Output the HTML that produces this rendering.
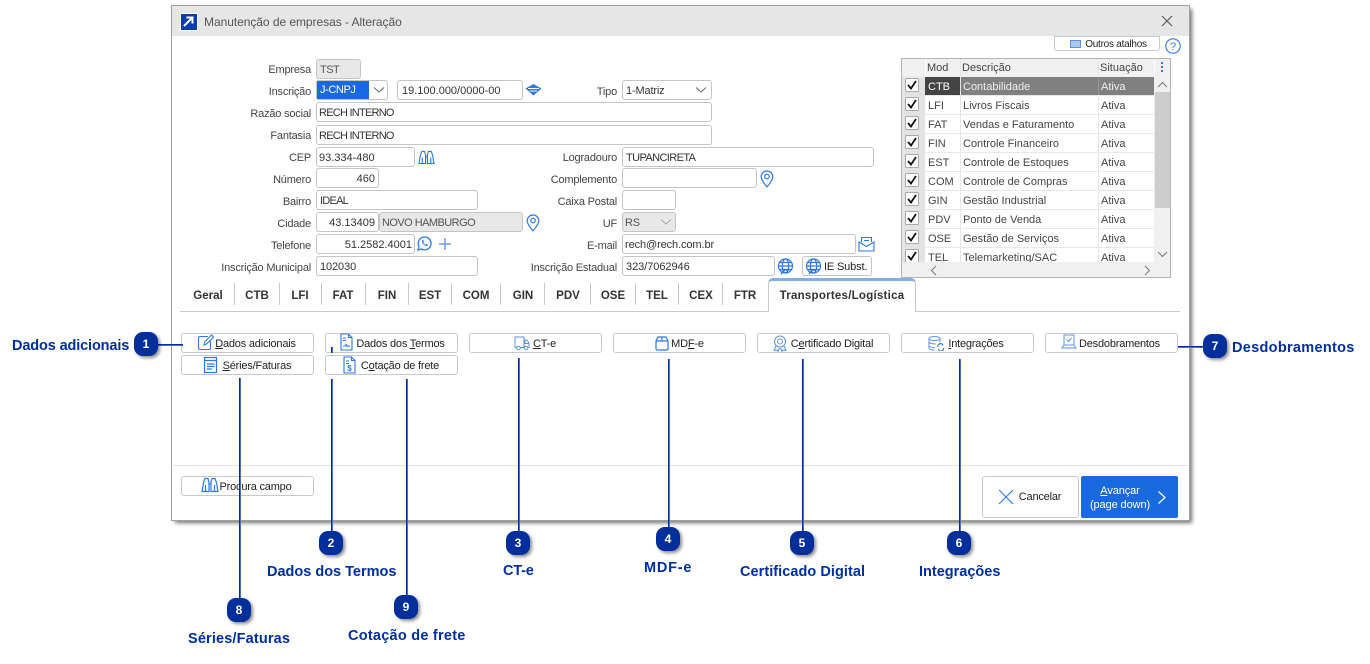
<!DOCTYPE html>
<html lang="pt-BR"><head><meta charset="utf-8"><title>Manutenção de empresas</title>
<style>
html,body{margin:0;padding:0;background:#fff}
#p{position:relative;width:1370px;height:664px;overflow:hidden;background:#fff;font:11px/18px "Liberation Sans",sans-serif;color:#333}
#p div,#p svg{position:absolute}
#d{left:172px;top:6px;width:1017px;height:514px;background:#fff;box-shadow:0 0 0 1px #a0a0a0,3px 3px 4px rgba(0,0,0,.55)}
#t{left:172px;top:6px;width:1017px;height:30px;background:#e6e6e6;font-size:12px;line-height:31px;color:#555}
.l{width:110px;text-align:right;white-space:nowrap;height:22px;line-height:22px;color:#444;letter-spacing:-.2px}
.f{box-sizing:border-box;border:1px solid #c4c4c4;border-radius:3px;background:#fff;white-space:nowrap;padding:0 2px;line-height:20px;height:20px;color:#333;letter-spacing:-.15px}
.g{background:#e8e8e8;color:#555}
.r{text-align:right}
.c{letter-spacing:-.75px}
.b{box-sizing:border-box;width:133px;height:20px;border:1px solid #c8c8c8;border-radius:3px;background:#fff;text-align:center;line-height:20px;color:#222;white-space:nowrap;letter-spacing:-.2px}
.tb{top:285px;height:22px;line-height:22px;font-weight:bold;font-size:11.5px;color:#333;text-align:center;transform:translateX(-50%);white-space:nowrap}
.s{top:283px;width:1px;height:22px;background:#c8c8c8}
.h{top:58px;height:20px;line-height:20px;color:#444;white-space:nowrap}
.hl{background:linear-gradient(180deg,#002f9c 70%,#9fb1de 70%);height:2px}
.vl{background:linear-gradient(90deg,#002f9c 70%,#9fb1de 70%);width:2px}
.n{width:24px;height:24px;border-radius:9px;background:#002f9c;color:#fff;font-weight:bold;font-size:12px;line-height:24px;text-align:center;box-shadow:2px 2px 3px rgba(0,0,0,.45)}
.x{color:#002f9c;font-weight:bold;font-size:14.5px;line-height:22px;white-space:nowrap;height:22px}
.i{fill:none;stroke:#2f78e4;stroke-width:1.2}
</style></head><body><div id="p">
<svg width="0" height="0" style="position:absolute"><defs>
<symbol id="pin" viewBox="0 0 14 18"><path d="M7 1C3.700 1 1.200 3.500 1.200 6.600 1.200 10.500 7 16.800 7 16.800S12.800 10.500 12.800 6.600C12.800 3.500 10.300 1 7 1Z"/><circle cx="7" cy="6.500" r="2.300"/></symbol>
<symbol id="bin" viewBox="0 0 18 16"><path d="M1 14.500 2.500 5.500 4 1.500H7L8 5.500V14.500ZM10 14.500V5.500L11 1.500H14L15.500 5.500 17 14.500ZM8 7H10M4.500 14.500V8M13.500 14.500V8"/></symbol>
<symbol id="glo" viewBox="0 0 17 17"><circle cx="8.500" cy="8" r="7"/><ellipse cx="8.500" cy="8" rx="3.200" ry="7"/><path d="M1.500 8H15.500M2.500 4.500H14.500M2.500 11.500H14.500"/><path d="M4 16 8 11.500 11 13" stroke-width="1.500"/></symbol>
</defs></svg>
<div style="left:175px;top:518px;width:197px;height:3px;background:repeating-linear-gradient(90deg,#777 0 3px,transparent 3px 7px);opacity:.5"></div>
<div id="d"></div>
<div id="t"><div style="left:32px;top:1px;white-space:nowrap;letter-spacing:-.05px">Manutenção de empresas - Alteração</div></div>
<div style="left:180px;top:13px;width:16px;height:16px;background:#0b3ea8;border:1px solid #fff"></div>
<svg style="left:181px;top:14px" width="15" height="15" viewBox="0 0 15 15"><path d="M3 12 11 4M5.500 3.500H11.500V9.500" fill="none" stroke="#fff" stroke-width="2"/></svg>
<svg style="left:1161px;top:15px" width="12" height="12" viewBox="0 0 12 12"><path d="M1 1 11 11M11 1 1 11" stroke="#555" stroke-width="1.100"/></svg>

<div class="b" style="left:1054px;top:36px;width:106px;height:15px;line-height:16px;font-size:10px;letter-spacing:-.25px;border-radius:0 0 3px 3px;padding-left:18px">Outros atalhos</div>
<div style="left:1070px;top:40px;width:9px;height:6px;background:#a9c8ee;border:1px solid #5b93d8"></div>
<svg style="left:1165px;top:38px" width="16" height="16" viewBox="0 0 16 16"><circle cx="8" cy="8" r="7.200" fill="none" stroke="#2f78e4" stroke-width="1.100"/><text x="8" y="12" text-anchor="middle" font-size="11" font-family="Liberation Sans" fill="#2f78e4">?</text></svg>

<div class="l" style="left:201px;top:59px">Empresa</div>
<div class="f g" style="left:316px;top:59px;width:45px;padding-left:3px;letter-spacing:-.5px">TST</div>
<div class="l" style="left:201px;top:81px">Inscrição</div>
<div class="f" style="left:316px;top:80px;width:72px;padding:0"></div>
<div style="left:317px;top:81px;width:52px;height:18px;background:#1a6adf;color:#fff;line-height:19px;padding-left:3px;box-sizing:border-box;letter-spacing:-.4px">J-CNPJ</div>
<svg style="left:373px;top:86px" width="12" height="8" viewBox="0 0 12 8"><path d="M1 1.500 6 6 11 1.500" fill="none" stroke="#666"/></svg>
<div class="f" style="left:397px;top:80px;width:126px;padding-left:4px;letter-spacing:0">19.100.000/0000-00</div>
<svg style="left:525px;top:84px" width="17" height="12" viewBox="0 0 17 12"><path d="M8.500 0 16.500 4.500 8.500 11.500 .5 4.500Z" fill="#2f78e4"/><path d="M3 4.500H14M5 7H12" stroke="#fff" stroke-width=".9"/></svg>
<div class="l" style="left:507px;top:81px">Tipo</div>
<div class="f" style="left:622px;top:80px;width:90px;padding-left:3px">1-Matriz</div>
<svg style="left:695px;top:86px" width="12" height="8" viewBox="0 0 12 8"><path d="M1 1.500 6 6 11 1.500" fill="none" stroke="#666"/></svg>

<div class="l" style="left:201px;top:103px">Razão social</div>
<div class="f c" style="left:316px;top:102px;width:396px">RECH INTERNO</div>
<div class="l" style="left:201px;top:125px">Fantasia</div>
<div class="f c" style="left:316px;top:125px;width:396px">RECH INTERNO</div>
<div class="l" style="left:201px;top:147px">CEP</div>
<div class="f" style="left:316px;top:147px;width:99px;letter-spacing:0">93.334-480</div>
<svg class="i" style="left:418px;top:150px" width="17" height="15"><use href="#bin"/></svg>
<div class="l" style="left:201px;top:169px">Número</div>
<div class="f r" style="left:316px;top:168px;width:63px;padding-right:3px;letter-spacing:0">460</div>
<div class="l" style="left:201px;top:191px">Bairro</div>
<div class="f c" style="left:316px;top:190px;width:162px;padding-left:3px">IDEAL</div>
<div class="l" style="left:201px;top:213px">Cidade</div>
<div class="f r" style="left:316px;top:212px;width:63px;padding-right:3px;letter-spacing:0">43.13409</div>
<div class="f g" style="left:379px;top:212px;width:144px;letter-spacing:-.55px">NOVO HAMBURGO</div>
<svg class="i" style="left:526px;top:214px" width="14" height="18"><use href="#pin"/></svg>
<div class="l" style="left:201px;top:235px">Telefone</div>
<div class="f r" style="left:316px;top:234px;width:99px;letter-spacing:0">51.2582.4001</div>
<svg style="left:417px;top:236px" width="15" height="15" viewBox="0 0 15 15"><path d="M1 14 2 10.500A6.400 6.400 0 1 1 4.500 13Z" fill="none" stroke="#2f78e4" stroke-width="1.300"/><path d="M5 4.500C4.500 7 7.500 10.500 10.500 10 11.200 9 10.800 8.500 9.500 8L8.700 8.800C7.500 8.300 6.800 7.500 6.300 6.300L7 5.500C6.500 4 5.800 3.800 5 4.500Z" fill="#2f78e4"/></svg>
<svg style="left:438px;top:237px" width="14" height="14" viewBox="0 0 14 14"><path d="M7 1V13M1 7H13" stroke="#6e9fe8" stroke-width="1.500"/></svg>
<div class="l" style="left:201px;top:257px">Inscrição Municipal</div>
<div class="f" style="left:316px;top:256px;width:162px;padding-left:3px;letter-spacing:-.1px">102030</div>

<div class="l" style="left:507px;top:147px">Logradouro</div>
<div class="f" style="left:622px;top:147px;width:252px;padding-left:3px;letter-spacing:-.6px">TUPANCIRETA</div>
<div class="l" style="left:507px;top:169px">Complemento</div>
<div class="f" style="left:622px;top:168px;width:135px"></div>
<svg class="i" style="left:760px;top:170px" width="14" height="18"><use href="#pin"/></svg>
<div class="l" style="left:507px;top:191px">Caixa Postal</div>
<div class="f" style="left:622px;top:190px;width:54px"></div>
<div class="l" style="left:507px;top:213px">UF</div>
<div class="f g" style="left:622px;top:212px;width:54px">RS</div>
<svg style="left:660px;top:218px" width="12" height="8" viewBox="0 0 12 8"><path d="M1 1.500 6 6 11 1.500" fill="none" stroke="#aaa"/></svg>
<div class="l" style="left:507px;top:235px">E-mail</div>
<div class="f" style="left:622px;top:234px;width:234px;letter-spacing:-.1px">rech@rech.com.br</div>
<svg style="left:858px;top:236px" width="17" height="16" viewBox="0 0 17 16"><path d="M3.500 6V1.500H13.500V6M1 6V15H16V6L8.500 10.500ZM6 4.500H11" fill="none" stroke="#2f78e4" stroke-width="1.100"/></svg>
<div class="l" style="left:507px;top:257px">Inscrição Estadual</div>
<div class="f" style="left:622px;top:256px;width:153px;padding-left:3px;letter-spacing:-.05px">323/7062946</div>
<svg class="i" style="left:777px;top:258px" width="17" height="17"><use href="#glo"/></svg>
<div class="f" style="left:802px;top:256px;width:70px;padding:0 0 0 21px;color:#222">IE Subst.</div>
<svg class="i" style="left:805px;top:258px" width="17" height="17"><use href="#glo"/></svg>

<div style="left:901px;top:58px;width:270px;height:220px;box-sizing:border-box;border:1px solid #b5b5b5;background:#f0f0f0;overflow:hidden" id="grid">
<div style="left:0;top:18px;width:23px;height:186px;background:#e3e3e3"></div>
<div style="left:23px;top:18px;width:229px;height:186px;background:#fff"></div>
<div style="left:23px;top:0;width:1px;height:204px;background:#fff"></div>
<div style="left:58px;top:0;width:1px;height:204px;background:#e6e6e6"></div>
<div style="left:196px;top:0;width:1px;height:204px;background:#e6e6e6"></div>
<div style="left:252px;top:0;width:1px;height:18px;background:#fff"></div>
<div style="left:23px;top:18px;width:35px;height:19px;background:#444"></div>
<div style="left:59px;top:18px;width:193px;height:19px;background:#808080"></div>
<div style="left:196px;top:18px;width:1px;height:19px;background:#999"></div>
<div style="left:23px;top:55px;width:229px;height:1px;background:#e8e8e8"></div>
<div style="left:23px;top:74px;width:229px;height:1px;background:#e8e8e8"></div>
<div style="left:23px;top:93px;width:229px;height:1px;background:#e8e8e8"></div>
<div style="left:23px;top:112px;width:229px;height:1px;background:#e8e8e8"></div>
<div style="left:23px;top:131px;width:229px;height:1px;background:#e8e8e8"></div>
<div style="left:23px;top:150px;width:229px;height:1px;background:#e8e8e8"></div>
<div style="left:23px;top:169px;width:229px;height:1px;background:#e8e8e8"></div>
<div style="left:23px;top:188px;width:229px;height:1px;background:#e8e8e8"></div>
<div style="left:23px;top:36px;width:229px;height:1px;background:#e8e8e8"></div>
<div style="left:253px;top:33px;width:15px;height:116px;background:#cdcdcd"></div>
</div>
<div class="h" style="left:927px">Mod</div><div class="h" style="left:962px">Descrição</div><div class="h" style="left:1100px">Situação</div>
<div style="left:1161px;top:62px;width:2px;height:2px;background:#2f78e4;box-shadow:0 4px #2f78e4,0 8px #2f78e4"></div>
<div class="h" style="left:928px;top:77px;color:#fff">CTB</div><div class="h" style="left:963px;top:77px;color:#eee">Contabilidade</div><div class="h" style="left:1101px;top:77px;color:#eee">Ativa</div>
<div class="h" style="left:928px;top:96px">LFI</div><div class="h" style="left:963px;top:96px">Livros Fiscais</div><div class="h" style="left:1101px;top:96px">Ativa</div>
<div class="h" style="left:928px;top:115px">FAT</div><div class="h" style="left:963px;top:115px">Vendas e Faturamento</div><div class="h" style="left:1101px;top:115px">Ativa</div>
<div class="h" style="left:928px;top:134px">FIN</div><div class="h" style="left:963px;top:134px">Controle Financeiro</div><div class="h" style="left:1101px;top:134px">Ativa</div>
<div class="h" style="left:928px;top:153px">EST</div><div class="h" style="left:963px;top:153px">Controle de Estoques</div><div class="h" style="left:1101px;top:153px">Ativa</div>
<div class="h" style="left:928px;top:172px">COM</div><div class="h" style="left:963px;top:172px">Controle de Compras</div><div class="h" style="left:1101px;top:172px">Ativa</div>
<div class="h" style="left:928px;top:191px">GIN</div><div class="h" style="left:963px;top:191px">Gestão Industrial</div><div class="h" style="left:1101px;top:191px">Ativa</div>
<div class="h" style="left:928px;top:210px">PDV</div><div class="h" style="left:963px;top:210px">Ponto de Venda</div><div class="h" style="left:1101px;top:210px">Ativa</div>
<div class="h" style="left:928px;top:229px">OSE</div><div class="h" style="left:963px;top:229px">Gestão de Serviços</div><div class="h" style="left:1101px;top:229px">Ativa</div>
<div class="h" style="left:928px;top:248px">TEL</div><div class="h" style="left:963px;top:248px">Telemarketing/SAC</div><div class="h" style="left:1101px;top:248px">Ativa</div>
<svg style="left:905px;top:78px" width="14" height="186" viewBox="0 0 14 186">
<g fill="#fff" stroke="#aaa"><rect x=".5" y=".5" width="13" height="13" rx="1"/><rect x=".5" y="19.500" width="13" height="13" rx="1"/><rect x=".5" y="38.500" width="13" height="13" rx="1"/><rect x=".5" y="57.500" width="13" height="13" rx="1"/><rect x=".5" y="76.500" width="13" height="13" rx="1"/><rect x=".5" y="95.500" width="13" height="13" rx="1"/><rect x=".5" y="114.500" width="13" height="13" rx="1"/><rect x=".5" y="133.500" width="13" height="13" rx="1"/><rect x=".5" y="152.500" width="13" height="13" rx="1"/><rect x=".5" y="171.500" width="13" height="13" rx="1"/></g>
<path d="M3 7 6 10.500 11 3M3 26 6 29.500 11 22M3 45 6 48.500 11 41M3 64 6 67.500 11 60M3 83 6 86.500 11 79M3 102 6 105.500 11 98M3 121 6 124.500 11 117M3 140 6 143.500 11 136M3 159 6 162.500 11 155M3 178 6 181.500 11 174" fill="none" stroke="#111" stroke-width="1.800"/></svg>
<div style="left:902px;top:262px;width:268px;height:15px;background:#f0f0f0"></div>
<svg style="left:1157px;top:81px" width="11" height="7" viewBox="0 0 11 7"><path d="M1 6 5.500 1.500 10 6" fill="none" stroke="#777"/></svg>
<svg style="left:1157px;top:251px" width="11" height="7" viewBox="0 0 11 7"><path d="M1 1 5.500 5.500 10 1" fill="none" stroke="#777"/></svg>
<svg style="left:930px;top:265px" width="7" height="11" viewBox="0 0 7 11"><path d="M6 1 1.500 5.500 6 10" fill="none" stroke="#777"/></svg>
<svg style="left:1144px;top:265px" width="7" height="11" viewBox="0 0 7 11"><path d="M1 1 5.500 5.500 1 10" fill="none" stroke="#777"/></svg>

<div class="tb" style="left:208px">Geral</div><div class="s" style="left:234px"></div>
<div class="tb" style="left:257px">CTB</div><div class="s" style="left:279px"></div>
<div class="tb" style="left:300px">LFI</div><div class="s" style="left:321px"></div>
<div class="tb" style="left:343px">FAT</div><div class="s" style="left:365px"></div>
<div class="tb" style="left:387px">FIN</div><div class="s" style="left:408px"></div>
<div class="tb" style="left:430px">EST</div><div class="s" style="left:451px"></div>
<div class="tb" style="left:476px">COM</div><div class="s" style="left:500px"></div>
<div class="tb" style="left:523px">GIN</div><div class="s" style="left:544px"></div>
<div class="tb" style="left:568px">PDV</div><div class="s" style="left:590px"></div>
<div class="tb" style="left:613px">OSE</div><div class="s" style="left:635px"></div>
<div class="tb" style="left:657px">TEL</div><div class="s" style="left:678px"></div>
<div class="tb" style="left:701px">CEX</div><div class="s" style="left:722px"></div>
<div class="tb" style="left:745px">FTR</div>
<div style="left:180px;top:311px;width:1000px;height:1px;background:#c8c8c8"></div>
<div style="left:768px;top:278px;width:148px;height:34px;box-sizing:border-box;background:#fff;border:1px solid #c8c8c8;border-top:3px solid #7fb0ea;border-bottom:0;border-radius:5px 5px 0 0"></div>
<div class="tb" style="left:842px;font-size:11.5px;letter-spacing:.25px">Transportes/Logística</div>

<div class="b" style="left:181px;top:333px;padding-left:16px"><u>D</u>ados adicionais</div>
<svg style="left:197px;top:333px" width="18" height="18" viewBox="0 0 18 18"><path d="M11 3.500H3Q1.500 3.500 1.500 5V15Q1.500 16.500 3 16.500H12Q13.500 16.500 13.500 15V8M7 12 7.800 8.800 14.500 2 16.500 4 9.800 10.800Z" fill="none" stroke="#2f78e4" stroke-width="1.100"/></svg>
<div class="b" style="left:325px;top:333px;padding-left:18px">Dados dos <u>T</u>ermos</div>
<svg style="left:340px;top:333px" width="13" height="18" viewBox="0 0 13 18"><path d="M1 1H8.500L12 4.500V17H1ZM8.500 1V4.500H12M3 5H6M3 7.500H6M3 13H5L6 11.500 7.500 13.500 8 13H10" fill="none" stroke="#2f78e4" stroke-width="1.100"/></svg>
<div class="b" style="left:469px;top:333px;padding-left:18px"><u>C</u>T-e</div>
<svg style="left:514px;top:336px" width="16" height="15" viewBox="0 0 16 15"><path d="M1 1H10V11.500H6M3 11.500H1V1M10 4H13L15 7V11.500H13.500M10.500 11.500H10M11 4V7.500H15" fill="none" stroke="#5b93dd"/><circle cx="4.500" cy="12" r="1.800" fill="none" stroke="#5b93dd"/><circle cx="12" cy="12" r="1.800" fill="none" stroke="#5b93dd"/></svg>
<div class="b" style="left:613px;top:333px;padding-left:16px">MD<u>F</u>-e</div>
<svg style="left:655px;top:336px" width="14" height="15" viewBox="0 0 14 15"><path d="M1 5 3 1H11L13 5V12.500Q13 14 11.500 14H2.500Q1 14 1 12.500ZM1 5H13M7 1V5" fill="none" stroke="#2f78e4" stroke-width="1.200"/></svg>
<div class="b" style="left:757px;top:333px;padding-left:17px">C<u>e</u>rtificado Digital</div>
<svg style="left:773px;top:335px" width="14" height="17" viewBox="0 0 14 17"><circle cx="7" cy="6.500" r="5.500" fill="none" stroke="#5b93dd"/><circle cx="7" cy="6.500" r="2.500" fill="none" stroke="#5b93dd"/><path d="M3 11 1 15.500 4 15 5 16.500 6.500 13M11 11 13 15.500 10 15 9 16.500 7.500 13" fill="none" stroke="#5b93dd"/></svg>
<div class="b" style="left:901px;top:333px;padding-left:17px"><u>I</u>ntegrações</div>
<svg style="left:928px;top:336px" width="17" height="15" viewBox="0 0 17 15"><ellipse cx="6.500" cy="2.500" rx="5.500" ry="2" fill="none" stroke="#5b93dd"/><path d="M1 2.500V12Q1 14 6.500 14M12 2.500V6M1 6Q2 8 8 8M1 10Q2 11.500 7 11.500" fill="none" stroke="#5b93dd"/><path d="M10 11A2.500 2.500 0 0 1 15 9.500M15.500 12A2.500 2.500 0 0 1 10.500 13" fill="none" stroke="#2f78e4" stroke-width="1.200"/></svg>
<div class="b" style="left:1045px;top:333px;padding-left:16px">Desdobramentos</div>
<svg style="left:1061px;top:334px" width="16" height="15" viewBox="0 0 16 15"><path d="M3 1H13V11H3ZM1 14H15L13 11H3ZM5.500 5.500 7.500 7.500 10.500 4" fill="none" stroke="#5b93dd"/></svg>
<div class="b" style="left:181px;top:355px;padding-left:19px"><u>S</u>éries/Faturas</div>
<svg style="left:203px;top:356px" width="15" height="18" viewBox="0 0 15 18"><path d="M1.500 1.500H13.500V16.500H1.500ZM1.500 4.500H13.500M4 8H11.500M4 10.500H11.500M4 13H9" fill="none" stroke="#2f78e4" stroke-width="1.200"/></svg>
<div class="b" style="left:325px;top:355px;padding-left:17px">C<u>o</u>tação de frete</div>
<svg style="left:343px;top:356px" width="13" height="18" viewBox="0 0 13 18"><path d="M1 1H8.500L12 4.500V17H1ZM8.500 1V4.500H12M3 5H6M3 7.500H6" fill="none" stroke="#2f78e4" stroke-width="1.100"/><text x="6.500" y="15" text-anchor="middle" font-size="8" font-weight="bold" font-family="Liberation Sans" fill="#2f78e4">$</text></svg>

<div style="left:173px;top:465px;width:1015px;height:1px;background:#e2e2e2"></div>
<div class="b" style="left:181px;top:476px;padding-left:16px">Procura campo</div>
<svg class="i" style="left:201px;top:477px" width="18" height="16"><use href="#bin"/></svg>
<div class="b" style="left:982px;top:476px;width:97px;height:42px;line-height:41px;padding-left:19px;color:#222">Cancelar</div>
<svg style="left:998px;top:489px" width="16" height="16" viewBox="0 0 16 16"><path d="M1 1 15 15M15 1 1 15" stroke="#2f78e4" stroke-width="1.100"/></svg>
<div style="left:1081px;top:476px;width:97px;height:42px;background:#1a6adf;border-radius:2px;color:#fff;text-align:center;line-height:14px;box-sizing:border-box;padding:8px 19px 0 0;white-space:nowrap;letter-spacing:-.1px"><u>A</u>vançar<br>(page down)</div>
<svg style="left:1157px;top:490px" width="10" height="15" viewBox="0 0 10 15"><path d="M1.500 1.500 8 7.500 1.500 13.500" fill="none" stroke="#fff" stroke-width="1.200"/></svg>

<div class="hl" style="left:158px;top:344px;width:25px"></div>
<div class="hl" style="left:1178px;top:346px;width:26px"></div>
<div class="vl" style="left:331px;top:347px;height:6px"></div>
<div class="vl" style="left:331px;top:379px;height:152px"></div>
<div class="vl" style="left:518px;top:358px;height:173px"></div>
<div class="vl" style="left:668px;top:359px;height:168px"></div>
<div class="vl" style="left:802px;top:359px;height:172px"></div>
<div class="vl" style="left:959px;top:359px;height:172px"></div>
<div class="vl" style="left:239px;top:378px;height:220px"></div>
<div class="vl" style="left:406px;top:379px;height:216px"></div>

<div class="n" style="left:134px;top:332px">1</div>
<div class="n" style="left:319px;top:531px">2</div>
<div class="n" style="left:506px;top:531px">3</div>
<div class="n" style="left:656px;top:527px">4</div>
<div class="n" style="left:790px;top:531px">5</div>
<div class="n" style="left:947px;top:531px">6</div>
<div class="n" style="left:1203px;top:334px">7</div>
<div class="n" style="left:227px;top:598px">8</div>
<div class="n" style="left:394px;top:595px">9</div>

<div class="x" style="left:12px;top:335px;letter-spacing:-.13px">Dados adicionais</div>
<div class="x" style="left:267px;top:561px">Dados dos Termos</div>
<div class="x" style="left:503px;top:560px;letter-spacing:-.2px">CT-e</div>
<div class="x" style="left:644px;top:557px;letter-spacing:.8px">MDF-e</div>
<div class="x" style="left:740px;top:561px;letter-spacing:.05px">Certificado Digital</div>
<div class="x" style="left:919px;top:561px">Integrações</div>
<div class="x" style="left:1232px;top:337px;letter-spacing:.3px">Desdobramentos</div>
<div class="x" style="left:188px;top:628px;letter-spacing:.15px">Séries/Faturas</div>
<div class="x" style="left:348px;top:625px;letter-spacing:.25px">Cotação de frete</div>
</div></body></html>
